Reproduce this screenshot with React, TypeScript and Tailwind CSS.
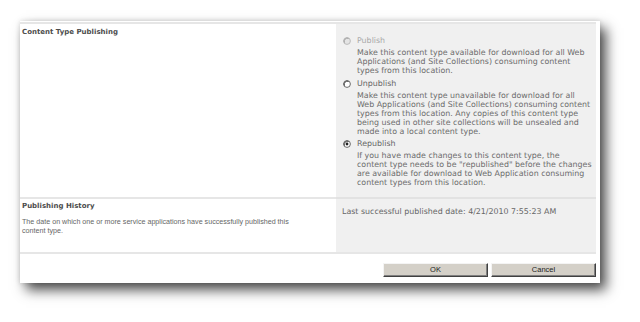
import React from "react";

const Radio = ({ state }: { state: "disabled" | "off" | "on" }) => {
  const stroke = state === "disabled" ? "#b5b5b5" : "#5a5a5a";
  const fill = state === "disabled" ? "#e4e4e4" : "#ffffff";
  return (
    <svg width="8" height="8" viewBox="0 0 8 8" className="block">
      <circle cx="4" cy="4" r="3.4" fill={fill} stroke={stroke} strokeWidth="0.9" />
      <path d="M1.4 5.6 A3.2 3.2 0 0 1 5.6 1.4" fill="none" stroke={state === "disabled" ? "#9a9a9a" : "#333"} strokeWidth="0.9" />
      {state === "on" && <circle cx="4" cy="4" r="1.4" fill="#222" />}
    </svg>
  );
};

const Option = ({
  state,
  label,
  lines,
  mb,
}: {
  state: "disabled" | "off" | "on";
  label: string;
  lines: string[];
  mb: string;
}) => (
  <div className={`flex ${mb}`}>
    <div className="w-[15px] pl-[1px] pt-[1px]">
      <Radio state={state} />
    </div>
    <div>
      <div className={`leading-[9px] ${state === "disabled" ? "text-[#a8a8a8]" : "text-[#666]"}`}>{label}</div>
      <div className="mt-[3px] text-[#6c6c6c]">
        {lines.map((l, i) => (
          <div key={i} className="leading-[9px] whitespace-nowrap">
            {l}
          </div>
        ))}
      </div>
    </div>
  </div>
);

export default function App() {
  return (
    <div className="w-[640px] h-[322px] bg-white pt-[21px] pl-[20px] overflow-hidden">
      <div
        className="w-[580px] h-[262px] bg-white pr-[4px] pt-[1px] flex flex-col shadow-[6px_7px_12px_rgba(0,0,0,0.7),0_0_5px_rgba(0,0,0,0.14)]"
        style={{ fontFamily: '"DejaVu Sans", Verdana, sans-serif' }}
      >
        <div className="h-[2px] bg-[#e6e6e6]" />
        {/* Row 1 */}
        <div className="h-[173px] flex">
          <div className="w-[316px] pl-[2px] pt-[4px]">
            <div className="text-[7px] font-bold leading-[9px] text-[#4c4c4c]">Content Type Publishing</div>
          </div>
          <div className="w-[260px] bg-[#f0f0f0] pl-[6px] pt-[12px] text-[7.9px]">
            <Option
              state="disabled"
              label="Publish"
              mb="mb-[4px]"
              lines={[
                "Make this content type available for download for all Web",
                "Applications (and Site Collections) consuming content",
                "types from this location.",
              ]}
            />
            <Option
              state="off"
              label="Unpublish"
              mb="mb-[3px]"
              lines={[
                "Make this content type unavailable for download for all",
                "Web Applications (and Site Collections) consuming content",
                "types from this location. Any copies of this content type",
                "being used in other site collections will be unsealed and",
                "made into a local content type.",
              ]}
            />
            <Option
              state="on"
              label="Republish"
              mb="mb-0"
              lines={[
                "If you have made changes to this content type, the",
                'content type needs to be "republished" before the changes',
                "are available for download to Web Application consuming",
                "content types from this location.",
              ]}
            />
          </div>
        </div>
        <div className="h-[2px] flex">
          <div className="w-[316px] bg-[#e6e6e6]" />
          <div className="w-[260px] bg-[#e2e2e2]" />
        </div>
        {/* Row 2 */}
        <div className="h-[53px] flex">
          <div className="w-[316px] pl-[2px] pt-[3px]">
            <div className="text-[7px] font-bold leading-[9px] text-[#4c4c4c]">Publishing History</div>
            <div
              className="mt-[7px] text-[7.15px] leading-[9px] text-[#666]"
              style={{ fontFamily: '"Liberation Sans", Arial, sans-serif' }}
            >
              <div className="whitespace-nowrap">
                The date on which one or more service applications have successfully published this
              </div>
              <div className="whitespace-nowrap">content type.</div>
            </div>
          </div>
          <div className="w-[260px] bg-[#f0f0f0] pl-[6px] pt-[8px]">
            <div className="text-[7.9px] leading-[9px] text-[#666] whitespace-nowrap">
              Last successful published date: 4/21/2010 7:55:23 AM
            </div>
          </div>
        </div>
        <div className="h-[2px] bg-[#e6e6e6]" />
        {/* Buttons */}
        <div className="flex-1 flex justify-end items-start pt-[9px] gap-[3px]">
          {["OK", "Cancel"].map((t) => (
            <div
              key={t}
              className="w-[105px] h-[14px] bg-[#d4d0c8] border border-t-[#f4f4f4] border-l-[#f4f4f4] border-r-[#404040] border-b-[#404040] shadow-[inset_-1px_-1px_0_#808080] flex items-center justify-center text-[7.5px] text-[#222]"
              style={{ fontFamily: '"Liberation Sans", Arial, sans-serif' }}
            >
              {t}
            </div>
          ))}
        </div>
      </div>
    </div>
  );
}
